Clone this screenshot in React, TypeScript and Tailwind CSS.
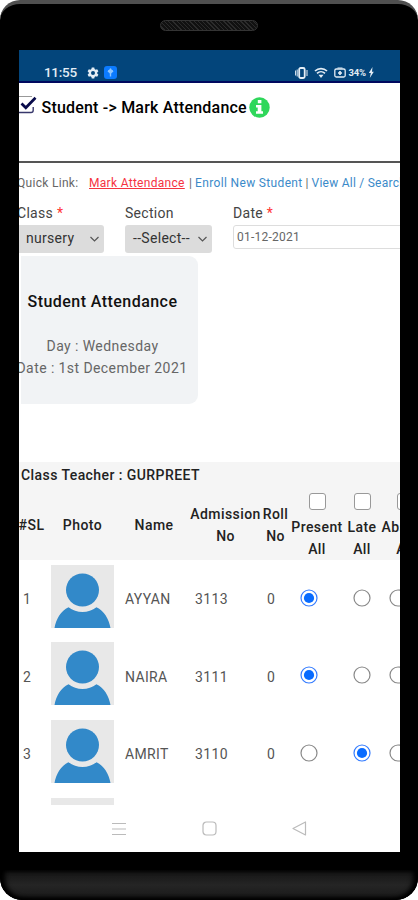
import type { ReactNode } from 'react'
import clsx from 'clsx'

type Status = 'present' | 'late' | 'absent'
type Student = { sl: number; name: string; admission: string; roll: number; status: Status }

const students: Student[] = [
  { sl: 1, name: 'AYYAN', admission: '3113', roll: 0, status: 'present' },
  { sl: 2, name: 'NAIRA', admission: '3111', roll: 0, status: 'present' },
  { sl: 3, name: 'AMRIT', admission: '3110', roll: 0, status: 'late' },
]

const columns = 'grid grid-cols-[31px_71px_72px_71px_29px_54px_36px_50px] -ml-[3px] w-[414px]'

function StatusBar() {
  return (
    <div className="flex h-[33px] shrink-0 items-center border-b-2 border-[#00085f] bg-[#03457b] pt-[14px] pl-[25px] text-[#e4edf5]">
      <span className="w-[43px] text-[13.5px] leading-none font-medium tracking-[-0.3px]">11:55</span>
      <svg width="12" height="12" viewBox="0 0 24 24" fill="currentColor">
        <path
          fillRule="evenodd"
          d="M9.5 1h5l.7 3.2 2 1.2 3.1-1 2.5 4.3-2.4 2.1v2.4l2.4 2.1-2.5 4.3-3.1-1-2 1.2-.7 3.2h-5l-.7-3.2-2-1.2-3.1 1-2.5-4.3 2.4-2.1v-2.4L1.2 8.7l2.5-4.3 3.1 1 2-1.2zM12 8a4 4 0 1 0 0 8 4 4 0 0 0 0-8z"
        />
      </svg>
      <svg className="ml-[5px]" width="13" height="13" viewBox="0 0 13 13">
        <rect width="13" height="13" rx="3" fill="#0b7bff" />
        <path d="M6.5 2.5v8M4 5h5" stroke="#8cc6ff" strokeWidth="1.4" />
        <path d="M6.5 2.5 9.5 5.5 6.5 8 3.5 5.5z" fill="#8cc6ff" />
      </svg>
      <svg className="ml-[178px]" width="13" height="12" viewBox="0 0 13 12" fill="none" stroke="currentColor">
        <rect x="4.2" y="1" width="5.5" height="10" rx="1.5" strokeWidth="1.8" />
        <path d="M.6 3.5v5M2.2 2.5v7M12 3v6" strokeWidth="1" />
      </svg>
      <svg className="ml-[6px]" width="14" height="12" viewBox="0 0 14 12" fill="none" stroke="currentColor">
        <path d="M1 4c3.4-3.2 8.6-3.2 12 0M3 6.3c2.3-2.1 5.7-2.1 8 0" strokeWidth="1.7" />
        <path d="M4.5 7.8h5L7 11z" fill="currentColor" stroke="none" />
      </svg>
      <svg className="ml-[5.5px]" width="12" height="11" viewBox="0 0 12 11" fill="none" stroke="currentColor">
        <rect x="0.8" y="2" width="10.4" height="8" rx="1.5" strokeWidth="1.3" />
        <path d="M3.5 1h5" strokeWidth="1.2" />
        <path d="M6 4v4M4 6h4" strokeWidth="1.7" />
      </svg>
      <span className="ml-[3px] text-[9.5px] leading-none font-bold tracking-[-0.2px]">34%</span>
      <svg className="ml-[2px]" width="7" height="11" viewBox="0 0 7 11" fill="currentColor">
        <path d="M4.5 0 .8 6h2L1.8 11l4-6.3H4z" />
      </svg>
    </div>
  )
}

function PageTitle() {
  return (
    <div className="flex h-[80px] shrink-0 items-start border-b-2 border-[#555] pt-[13px]">
      <svg className="mt-[-1px]" width="19" height="20" viewBox="0 0 19 20" fill="none">
        <path d="M0 1.5h13" stroke="#999" strokeWidth="1" />
        <path d="M0 17.5h12q2.2 0 2.2-2.2V12" stroke="#38386c" strokeWidth="1.4" />
        <path d="m2.5 8.5 4.3 4.3 9.7-10" stroke="#080a4a" strokeWidth="2.7" />
      </svg>
      <h1 className="ml-[3.5px] w-[208px] text-[16px] leading-[23px] font-medium tracking-[0.2px] whitespace-nowrap text-black">
        Student -&gt; Mark Attendance
      </h1>
      <svg width="21" height="21" viewBox="0 0 21 21" className="mt-px -ml-[0.5px]">
        <circle cx="10.5" cy="10.5" r="10.2" fill="#2fd75b" />
        <path d="M8.8 3h3.6v3.3H8.8zM7 8h5.4v6.3H14v2.5H7v-2.5h1.7v-3.8H7z" fill="#fff" />
      </svg>
    </div>
  )
}

function QuickLinks() {
  return (
    <nav className="-ml-[2px] flex w-[420px] pt-[11px] text-[12px] leading-[18px] whitespace-nowrap text-[#666]">
      <span className="w-[72px] shrink-0 tracking-[0.3px]">Quick Link:</span>
      <a className="w-[100px] shrink-0 tracking-[0.3px] text-[#f5333f]"><span className="underline">Mark Attendance</span></a>
      <span className="w-[6px] shrink-0">|</span>
      <a className="w-[110.5px] shrink-0 tracking-[0.35px] text-[#3b8ac9]">Enroll New Student</a>
      <span className="w-[6px] shrink-0">|</span>
      <a className="shrink-0 tracking-[0.25px] text-[#3b8ac9]">View All / Search</a>
    </nav>
  )
}

function Select({ value, className }: { value: string; className: string }) {
  return (
    <div
      className={clsx(
        'flex h-[28px] items-center justify-between rounded-[3px] bg-[#dcdcdc] pr-[4px] pb-px text-[14px] text-[#333]',
        className,
      )}
    >
      <span className="tracking-[0.3px]">{value}</span>
      <svg width="11" height="8" viewBox="0 0 11 8" fill="none" stroke="#555" strokeWidth="1.2">
        <path d="m1.5 2 4 4 4-4" />
      </svg>
    </div>
  )
}

function Field({ label, required, className, children }: { label: string; required?: boolean; className: string; children: ReactNode }) {
  return (
    <div className={clsx('shrink-0', className)}>
      <div className="mb-[3px] h-[18px] text-[14px] leading-[18px] tracking-[0.3px] text-[#444]">
        {label} {required && <span className="text-[#f33]">*</span>}
      </div>
      {children}
    </div>
  )
}

function Filters() {
  return (
    <div className="-ml-[2px] flex pt-[12px]">
      <Field label="Class" required className="w-[108px]">
        <Select value="nursery" className="w-[87px] pl-[9px]" />
      </Field>
      <Field label="Section" className="w-[108px]">
        <Select value="--Select--" className="w-[87px] pl-[8px]" />
      </Field>
      <Field label="Date" required className="w-[220px]">
        <div className="flex h-[24px] items-center rounded-[3px] border border-[#ddd] pb-px pl-[3px] text-[12px] tracking-[0.25px] text-[#666]">
          01-12-2021
        </div>
      </Field>
    </div>
  )
}

function SummaryCard() {
  return (
    <section className="mt-[3px] ml-[2px] h-[148px] w-[177px] shrink-0 rounded-r-[9px] bg-[#f1f3f5] pt-[35px] text-center whitespace-nowrap">
      <h2 className="-ml-[14px] text-[16px] leading-[22px] font-medium tracking-[0.45px] text-[#111]">Student Attendance</h2>
      <div className="mt-[23px] -ml-[14px] text-[14px] leading-[21.5px] tracking-[0.42px] text-[#666]">
        <p>Day : Wednesday</p>
        <p className="-ml-px">Date : 1st December 2021</p>
      </div>
    </section>
  )
}

function Heading({ lines, checkbox }: { lines: string[]; checkbox?: boolean }) {
  return (
    <div className={clsx('flex flex-col items-center whitespace-nowrap', checkbox ? 'pt-[3px]' : 'justify-center pt-px')}>
      {checkbox && <span className="mb-[7px] h-[17px] w-[17px] shrink-0 rounded-[3px] border border-[#999] bg-white" />}
      {lines.map((line) => (
        <span key={line}>{line}</span>
      ))}
    </div>
  )
}

function Radio({ checked, className }: { checked: boolean; className?: string }) {
  return (
    <span className={clsx('flex justify-center pt-[3px]', className)}>
      <svg width="18" height="18" viewBox="0 0 18 18" fill="none">
        <circle cx="9" cy="9" r="8" stroke={checked ? '#337bff' : '#888'} strokeWidth="1.2" />
        {checked && <circle cx="9" cy="9" r="5.1" fill="#086bff" />}
      </svg>
    </span>
  )
}

function Avatar() {
  return (
    <svg width="63" height="63" viewBox="0 0 63 63">
      <rect width="63" height="63" fill="#e8e8e8" />
      <circle cx="31.5" cy="25" r="16.5" fill="#3289c9" />
      <path d="M3.5 63C5 54 10 46 17.500 42.300c8 6.300 20 6.300 28 0C53 46 58 54 59.500 63z" fill="#3289c9" />
    </svg>
  )
}

function StudentRow({ student }: { student: Student }) {
  return (
    <div className={clsx(columns, 'mb-[14.7px] h-[63px] items-center text-[14px] tracking-[0.35px] text-[#555]')}>
      <span className="pt-[7px] pl-[7px]">{student.sl}</span>
      <span className="pl-[4px]"><Avatar /></span>
      <span className="pt-[7px] pl-[7px]">{student.name}</span>
      <span className="pt-[7px] pl-[5px]">{student.admission}</span>
      <span className="pt-[7px] pl-[6px]">{student.roll}</span>
      <Radio checked={student.status === 'present'} className="pr-[16px]" />
      <Radio checked={student.status === 'late'} />
      <Radio checked={student.status === 'absent'} className="pr-[15px]" />
    </div>
  )
}

function AttendanceTable() {
  return (
    <section className="mt-[58px] shrink-0">
      <div className="h-[98px] bg-[#f5f5f5] font-medium tracking-[0.43px] text-[#222]">
        <div className="h-[28px] pt-[3px] pl-[2px] text-[14px] leading-[21px]">Class Teacher : GURPREET</div>
        <div className={clsx(columns, 'h-[70px] text-[14px] leading-[21.5px]')}>
          <Heading lines={['#SL']} />
          <Heading lines={['Photo']} />
          <Heading lines={['Name']} />
          <Heading lines={['Admission', 'No']} />
          <Heading lines={['Roll', 'No']} />
          <Heading lines={['Present', 'All']} checkbox />
          <Heading lines={['Late', 'All']} checkbox />
          <Heading lines={['Absent', 'All']} checkbox />
        </div>
      </div>
      <div className="pt-[4.6px]">
        {students.map((student) => (
          <StudentRow key={student.sl} student={student} />
        ))}
        <div className="ml-[32px] h-[63px] w-[63px] bg-[#e8e8e8]" />
      </div>
    </section>
  )
}

function NavigationBar() {
  return (
    <div className="flex h-[47px] shrink-0 items-center justify-between bg-white px-[93px]">
      <svg width="14" height="14" viewBox="0 0 14 14" stroke="#bbb" strokeWidth="1.1">
        <path d="M0 1.5h14M0 7h14M0 12.5h14" />
      </svg>
      <svg width="15" height="15" viewBox="0 0 15 15" fill="none" stroke="#bbb" strokeWidth="1.2">
        <rect x="1" y="1" width="13" height="13" rx="3.5" />
      </svg>
      <svg width="15" height="15" viewBox="0 0 15 15" fill="none" stroke="#bbb" strokeWidth="1.2" strokeLinejoin="round">
        <path d="M13.5 1v13L1 7.5z" />
      </svg>
    </div>
  )
}

export default function App() {
  return (
    <div className="h-[900px] w-[418px] overflow-hidden bg-white font-['Roboto',sans-serif]">
      <div className="flex h-full flex-col overflow-hidden rounded-t-[20px] rounded-b-[22px] border-t-4 border-[#505050] bg-black">
        <div className="flex h-[46px] shrink-0 justify-center pt-[16px]">
          <div className="h-[11px] w-[98px] rounded-full border border-[#343434] bg-[repeating-linear-gradient(45deg,#111_0px,#111_2px,#2b2b2b_2px,#2b2b2b_3px)]" />
        </div>
        <main className="ml-[19px] flex h-[802px] w-[381px] shrink-0 flex-col overflow-hidden bg-white">
          <StatusBar />
          <div className="flex h-[722px] shrink-0 flex-col overflow-hidden">
            <PageTitle />
            <QuickLinks />
            <Filters />
            <SummaryCard />
            <AttendanceTable />
          </div>
          <NavigationBar />
        </main>
        <div className="mt-[18px] h-[30px] shrink-0 rounded-b-[22px] bg-linear-to-b from-[#141414] via-[#252525] to-[#181818] shadow-[inset_0_-2px_4px_#000,inset_5px_0_5px_#000,inset_-5px_0_5px_#000]" />
      </div>
    </div>
  )
}
